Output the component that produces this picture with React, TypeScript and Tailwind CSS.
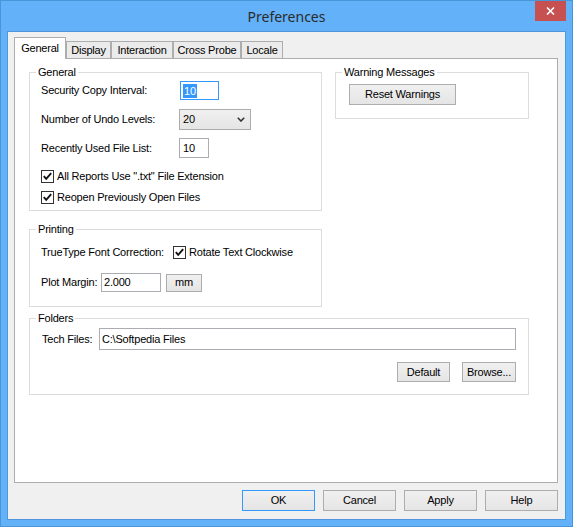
import React from 'react';

const tabs = [
    { label: 'General', w: 'w-[52px]', active: true },
    { label: 'Display', w: 'w-[45px]' },
    { label: 'Interaction', w: 'w-[62px]' },
    { label: 'Cross Probe', w: 'w-[68px]' },
    { label: 'Locale', w: 'w-[42px]' },
];

function Check() {
    return (
        <span className="w-[13px] h-[13px] border border-[#333333] bg-white flex items-center justify-center shrink-0">
            <svg width="11" height="11" viewBox="0 0 11 11">
                <path d="M1.8 5.2 L4.2 7.8 L9.2 2.2" fill="none" stroke="#111" strokeWidth="1.9" />
            </svg>
        </span>
    );
}

function Btn({ children, className = '' }: { children: React.ReactNode; className?: string }) {
    return (
        <div
            className={`flex items-center justify-center border bg-linear-to-b from-[#f0f0f0] to-[#e5e5e5] text-black ${className}`}
        >
            {children}
        </div>
    );
}

export default function App() {
    return (
        <div className="w-[573px] h-[527px] bg-[#63b1f8] border border-[#4a94d8] flex flex-col font-['Liberation_Sans',Arial,sans-serif] text-[11px] tracking-[-0.2px] text-black">
            {/* Title bar */}
            <div className="h-[30px] grid grid-cols-[1fr_auto_1fr] items-start">
                <div />
                <div className="h-[30px] flex items-center text-[14px] tracking-normal text-[#2b2b2b] font-['Noto_Sans',sans-serif]">
                    Preferences
                </div>
                <div className="flex justify-end pr-[6px]">
                    <div className="w-[31px] h-[20px] bg-[#c75050] flex items-center justify-center">
                        <svg width="9" height="8" viewBox="0 0 9 8">
                            <path d="M1 0.5 L8 7.5 M8 0.5 L1 7.5" stroke="#fff" strokeWidth="1.6" />
                        </svg>
                    </div>
                </div>
            </div>

            {/* Client area */}
            <div className="mx-[6px] mb-[6px] h-[489px] border border-[#4f97da] bg-[#f0f0f0] flex flex-col pl-[6px] pt-[5px]">
                {/* Tabs */}
                <div className="h-[21px] flex items-end">
                    {tabs.map((t) =>
                        t.active ? (
                            <div
                                key={t.label}
                                className={`${t.w} h-[22px] -mb-px relative z-10 bg-white border border-b-0 border-[#adadad] flex items-center justify-center`}
                            >
                                {t.label}
                            </div>
                        ) : (
                            <div
                                key={t.label}
                                className={`${t.w} h-[17px] bg-[#ebebeb] border border-b-0 border-[#adadad] flex items-center justify-center`}
                            >
                                {t.label}
                            </div>
                        )
                    )}
                </div>

                {/* Panel */}
                <div className="w-[544px] h-[425px] border border-[#adadad] bg-white pl-[14px] pt-[7px] flex flex-col">
                    <div className="flex items-start">
                        <div className="w-[293px] flex flex-col">
                            {/* General */}
                            <fieldset className="border border-[#dcdcdc] px-[6px] pb-[6px] min-w-0">
                                <legend className="px-[2px] leading-[13px]">General</legend>
                                <div className="pl-[5px] flex flex-col">
                                    <div className="mt-[2px] h-[19px] flex items-center">
                                        <span className="w-[139px]">Security Copy Interval:</span>
                                        <div className="w-[39px] h-[19px] border border-[#3399ff] bg-white flex items-center pl-[2px]">
                                            <span className="bg-[#3399ff] text-white leading-[14px] px-px">10</span>
                                        </div>
                                    </div>
                                    <div className="mt-[9px] h-[21px] flex items-center">
                                        <span className="w-[138px]">Number of Undo Levels:</span>
                                        <div className="w-[72px] h-[21px] border border-[#acacac] bg-linear-to-b from-[#f0f0f0] to-[#e5e5e5] flex items-center justify-between pl-[3px] pr-[5px]">
                                            <span>20</span>
                                            <svg width="8" height="5" viewBox="0 0 8 5">
                                                <path d="M0.8 0.8 L4 4 L7.2 0.8" fill="none" stroke="#333" strokeWidth="1.6" />
                                            </svg>
                                        </div>
                                    </div>
                                    <div className="mt-[8px] h-[20px] flex items-center">
                                        <span className="w-[138px]">Recently Used File List:</span>
                                        <div className="w-[30px] h-[20px] border border-[#abadb3] bg-white flex items-center pl-[3px]">
                                            10
                                        </div>
                                    </div>
                                    <div className="mt-[12px] h-[13px] flex items-center gap-[3px]">
                                        <Check />
                                        <span>All Reports Use ".txt" File Extension</span>
                                    </div>
                                    <div className="mt-[8px] h-[13px] flex items-center gap-[3px]">
                                        <Check />
                                        <span>Reopen Previously Open Files</span>
                                    </div>
                                </div>
                            </fieldset>

                            {/* Printing */}
                            <fieldset className="mt-[12px] border border-[#dcdcdc] px-[6px] pb-[14px] min-w-0">
                                <legend className="px-[2px] leading-[13px]">Printing</legend>
                                <div className="pl-[5px] flex flex-col">
                                    <div className="mt-[10px] h-[13px] flex items-center">
                                        <span className="w-[132px]">TrueType Font Correction:</span>
                                        <Check />
                                        <span className="ml-[3px]">Rotate Text Clockwise</span>
                                    </div>
                                    <div className="mt-[14px] h-[19px] flex items-center">
                                        <span className="w-[60px]">Plot Margin:</span>
                                        <div className="w-[60px] h-[19px] border border-[#abadb3] bg-white flex items-center pl-[2px]">
                                            2.000
                                        </div>
                                        <Btn className="ml-[5px] w-[36px] h-[18px] border-[#adadad]">mm</Btn>
                                    </div>
                                </div>
                            </fieldset>
                        </div>

                        {/* Warning Messages */}
                        <fieldset className="ml-[13px] w-[194px] border border-[#dcdcdc] px-[6px] pb-[13px] min-w-0">
                            <legend className="px-[2px] leading-[13px]">Warning Messages</legend>
                            <div className="pl-[7px] flex">
                                <Btn className="mt-[5px] w-[107px] h-[21px] border-[#adadad]">Reset Warnings</Btn>
                            </div>
                        </fieldset>
                    </div>

                    {/* Folders */}
                    <fieldset className="mt-[5px] w-[500px] border border-[#dcdcdc] px-[6px] pb-[12px] min-w-0">
                        <legend className="px-[2px] leading-[13px]">Folders</legend>
                        <div className="pl-[5px] pr-[6px] flex flex-col">
                            <div className="mt-[3px] h-[22px] flex items-center">
                                <span className="w-[58px] pl-px">Tech Files:</span>
                                <div className="flex-1 h-[22px] border border-[#abadb3] bg-white flex items-center pl-[2px]">
                                    {'C:\\Softpedia Files'}
                                </div>
                            </div>
                            <div className="mt-[12px] flex justify-end gap-[12px]">
                                <Btn className="w-[53px] h-[20px] border-[#adadad]">Default</Btn>
                                <Btn className="w-[54px] h-[20px] border-[#adadad]">Browse...</Btn>
                            </div>
                        </div>
                    </fieldset>
                </div>

                {/* Dialog buttons */}
                <div className="mt-[7px] w-[544px] flex justify-end gap-[8px]">
                    <Btn className="w-[73px] h-[21px] border-[#3399ff]">OK</Btn>
                    <Btn className="w-[73px] h-[21px] border-[#adadad]">Cancel</Btn>
                    <Btn className="w-[73px] h-[21px] border-[#adadad]">Apply</Btn>
                    <Btn className="w-[73px] h-[21px] border-[#adadad]">Help</Btn>
                </div>
            </div>
        </div>
    );
}
